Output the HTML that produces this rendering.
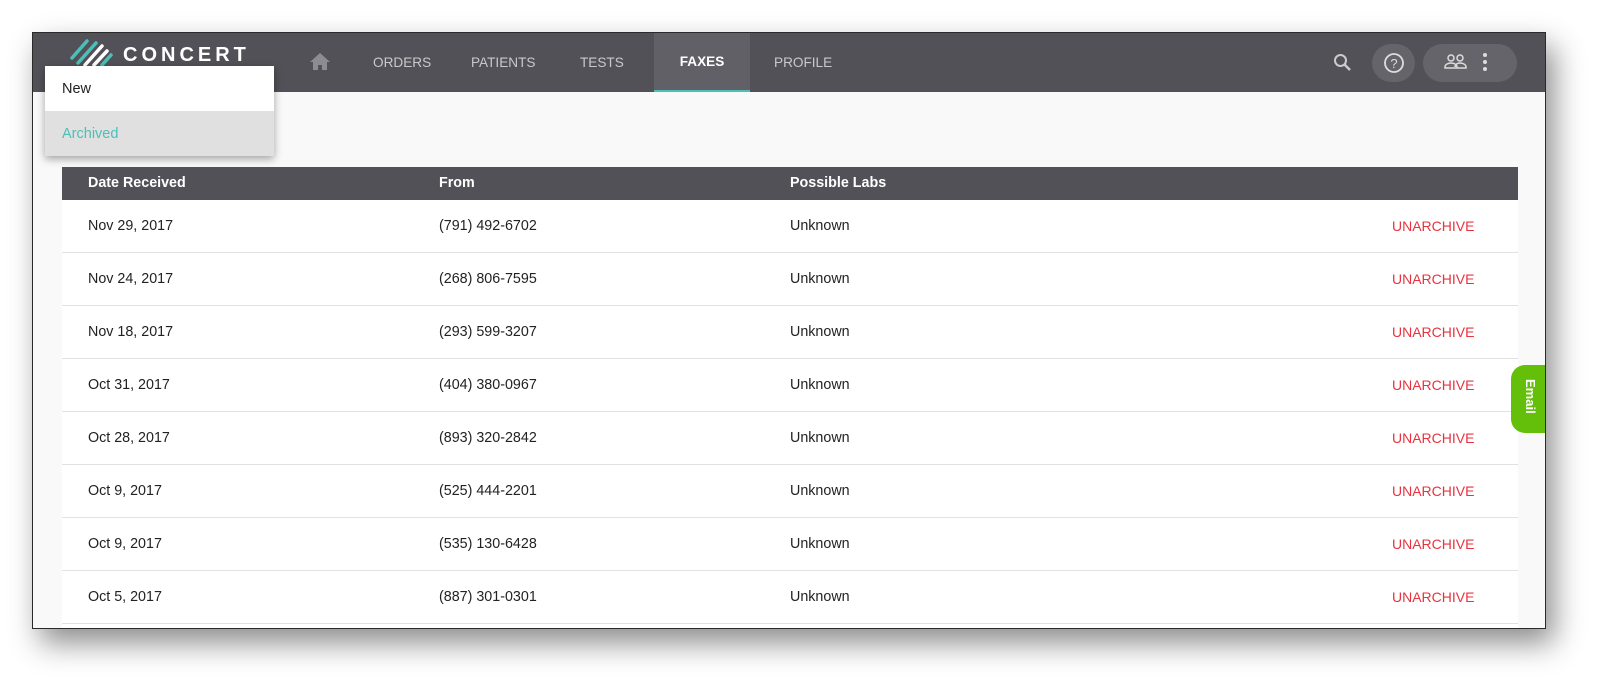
<!DOCTYPE html>
<html><head><style>
body{margin:0;width:1612px;height:696px;background:#fff;position:relative;overflow:hidden;font-family:"Liberation Sans",Arial,sans-serif;}
.win{position:absolute;left:32px;top:32px;width:1512px;height:595px;border:1.5px solid #2a2a2a;background:#f9f9f9;box-shadow:8px 14px 28px rgba(0,0,0,.45);overflow:hidden;}
.nav{position:absolute;left:0;top:0;width:100%;height:59px;background:#525157;}
.nav .it{position:absolute;top:0;height:59px;line-height:59px;color:#c9c9cc;font-size:13.6px;}
.tab{position:absolute;left:621px;top:0;width:96px;height:57px;background:#606066;border-bottom:2px solid #4cbfb8;color:#fff;font-size:13.6px;font-weight:bold;text-align:center;line-height:57px;}
.logo{position:absolute;left:90px;top:11px;color:#fff;font-size:20px;letter-spacing:4px;font-weight:bold;}
.dd{position:absolute;left:12px;top:33px;width:229px;height:90px;background:#fff;box-shadow:0 3px 8px rgba(0,0,0,.35);z-index:3;}
.dd div{height:45px;line-height:47px;padding-left:17px;font-size:14.5px;}
.tbl{position:absolute;left:29px;top:134px;width:1456px;}
.hd{height:33px;background:#525157;color:#fff;font-weight:bold;font-size:14.3px;position:relative;}
.row{height:52px;border-bottom:1px solid #e2e2e2;background:#fff;position:relative;font-size:14.3px;color:#222;}
.c{position:absolute;top:0;}
.hd .c{line-height:33px}.row .c{line-height:52px}
.c1{left:26px}.c2{left:377px}.c3{left:728px}.c4{left:1330px;color:#e8333f;font-size:14px}
.email{position:absolute;left:1478px;top:332px;width:40px;height:68px;background:#63bf0a;border-radius:14px 0 0 14px;color:#fff;font-weight:bold;font-size:13px;}
.email span{position:absolute;transform:rotate(90deg);transform-origin:0 0;left:27px;top:14px;}
</style></head><body>
<div class="win">
<div class="nav">
<svg style="position:absolute;left:37px;top:5px" width="50" height="30" viewBox="0 0 50 30">
<g stroke-width="3.5" stroke-linecap="round"><line x1="2" y1="20" x2="17" y2="3" stroke="#4cbfb8"/><line x1="8" y1="25" x2="26" y2="5" stroke="#4cbfb8"/><line x1="15" y1="27" x2="32" y2="8" stroke="#fff"/><line x1="24" y1="27" x2="37" y2="13" stroke="#fff"/><line x1="32" y1="27" x2="41" y2="17" stroke="#4cbfb8"/></g></svg>
<div class="logo">CONCERT</div>
<svg style="position:absolute;left:277px;top:20px" width="20" height="17" viewBox="0 0 20 17"><path d="M10 0L0 9h3v8h5v-5h4v5h5V9h3z" fill="#8d8c92"/></svg>
<div class="it" style="left:340px">ORDERS</div>
<div class="it" style="left:438px">PATIENTS</div>
<div class="it" style="left:547px">TESTS</div>
<div class="tab">FAXES</div>
<div class="it" style="left:741px">PROFILE</div>
<svg style="position:absolute;left:1300px;top:20px" width="20" height="20" viewBox="0 0 20 20"><circle cx="7.5" cy="7.5" r="5.5" stroke="#ccc" stroke-width="2" fill="none"/><line x1="11.5" y1="11.5" x2="17" y2="17" stroke="#ccc" stroke-width="2.5"/></svg>
<div style="position:absolute;left:1339px;top:11px;width:43px;height:38px;border-radius:19px;background:#65646a;"></div>
<svg style="position:absolute;left:1350px;top:19px" width="22" height="22" viewBox="0 0 22 22"><circle cx="11" cy="11" r="9" stroke="#ddd" stroke-width="1.8" fill="none"/><text x="11" y="16" font-size="13" fill="#ddd" text-anchor="middle" font-family="Liberation Sans">?</text></svg>
<div style="position:absolute;left:1390px;top:11px;width:94px;height:38px;border-radius:19px;background:#65646a;"></div>
<svg style="position:absolute;left:1411px;top:20px" width="24" height="18" viewBox="0 0 24 18"><g stroke="#ddd" stroke-width="1.5" fill="none"><circle cx="7" cy="5" r="3"/><circle cx="16" cy="5" r="3"/><path d="M1 14c0-3 4-4 6-4s6 1 6 4v1H1zM11 14c0-3 3-4 5-4s6 1 6 4v1h-9"/></g></svg>
<svg style="position:absolute;left:1449px;top:18px" width="6" height="22"><circle cx="3" cy="4" r="2" fill="#ddd"/><circle cx="3" cy="11" r="2" fill="#ddd"/><circle cx="3" cy="18" r="2" fill="#ddd"/></svg>
</div>
<div class="dd"><div style="color:#222">New</div><div style="background:#e0e0e0;color:#4cbfb8">Archived</div></div>
<div class="tbl">
<div class="hd"><div class="c c1">Date Received</div><div class="c c2">From</div><div class="c c3">Possible Labs</div></div>
<div class="row"><div class="c c1">Nov 29, 2017</div><div class="c c2">(791) 492-6702</div><div class="c c3">Unknown</div><div class="c c4">UNARCHIVE</div></div>
<div class="row"><div class="c c1">Nov 24, 2017</div><div class="c c2">(268) 806-7595</div><div class="c c3">Unknown</div><div class="c c4">UNARCHIVE</div></div>
<div class="row"><div class="c c1">Nov 18, 2017</div><div class="c c2">(293) 599-3207</div><div class="c c3">Unknown</div><div class="c c4">UNARCHIVE</div></div>
<div class="row"><div class="c c1">Oct 31, 2017</div><div class="c c2">(404) 380-0967</div><div class="c c3">Unknown</div><div class="c c4">UNARCHIVE</div></div>
<div class="row"><div class="c c1">Oct 28, 2017</div><div class="c c2">(893) 320-2842</div><div class="c c3">Unknown</div><div class="c c4">UNARCHIVE</div></div>
<div class="row"><div class="c c1">Oct 9, 2017</div><div class="c c2">(525) 444-2201</div><div class="c c3">Unknown</div><div class="c c4">UNARCHIVE</div></div>
<div class="row"><div class="c c1">Oct 9, 2017</div><div class="c c2">(535) 130-6428</div><div class="c c3">Unknown</div><div class="c c4">UNARCHIVE</div></div>
<div class="row"><div class="c c1">Oct 5, 2017</div><div class="c c2">(887) 301-0301</div><div class="c c3">Unknown</div><div class="c c4">UNARCHIVE</div></div>
<div class="row"></div>
</div>
<div class="email"><span>Email</span></div>
</div>
</body></html>
